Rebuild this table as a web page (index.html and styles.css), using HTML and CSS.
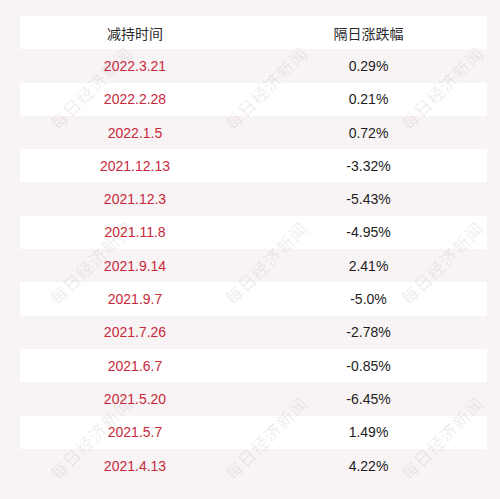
FILE: index.html
```html
<!DOCTYPE html>
<html lang="zh">
<head>
<meta charset="utf-8">
<link rel="stylesheet" href="styles.css">
</head>
<body>
<div class="page">
  <div class="table">
    <div class="row head"><div class="cell">减持时间</div><div class="cell">隔日涨跌幅</div></div>
    <div class="row"><div class="cell date">2022.3.21</div><div class="cell">0.29%</div></div>
    <div class="row white"><div class="cell date">2022.2.28</div><div class="cell">0.21%</div></div>
    <div class="row"><div class="cell date">2022.1.5</div><div class="cell">0.72%</div></div>
    <div class="row white"><div class="cell date">2021.12.13</div><div class="cell">-3.32%</div></div>
    <div class="row"><div class="cell date">2021.12.3</div><div class="cell">-5.43%</div></div>
    <div class="row white"><div class="cell date">2021.11.8</div><div class="cell">-4.95%</div></div>
    <div class="row"><div class="cell date">2021.9.14</div><div class="cell">2.41%</div></div>
    <div class="row white"><div class="cell date">2021.9.7</div><div class="cell">-5.0%</div></div>
    <div class="row"><div class="cell date">2021.7.26</div><div class="cell">-2.78%</div></div>
    <div class="row white"><div class="cell date">2021.6.7</div><div class="cell">-0.85%</div></div>
    <div class="row"><div class="cell date">2021.5.20</div><div class="cell">-6.45%</div></div>
    <div class="row white"><div class="cell date">2021.5.7</div><div class="cell">1.49%</div></div>
    <div class="row"><div class="cell date">2021.4.13</div><div class="cell">4.22%</div></div>
  </div>
  <div class="marks">
    <span class="mark m1">每日经济新闻</span>
    <span class="mark m2">每日经济新闻</span>
    <span class="mark m3">每日经济新闻</span>
    <span class="mark m4">每日经济新闻</span>
    <span class="mark m5">每日经济新闻</span>
    <span class="mark m6">每日经济新闻</span>
    <span class="mark m7">每日经济新闻</span>
    <span class="mark m8">每日经济新闻</span>
    <span class="mark m9">每日经济新闻</span>
  </div>
</div>
</body>
</html>
```

FILE: styles.css
```css
html, body {
  margin: 0;
  padding: 0;
}
body {
  background: #f8f4f5;
  font-family: "Liberation Sans", "Noto Sans CJK SC", sans-serif;
  font-size: 14px;
  color: #1c1c1c;
}
.page {
  position: relative;
  width: 500px;
  height: 499px;
  overflow: hidden;
  padding: 16px 13px 0 20px;
  box-sizing: border-box;
}
.table {
  display: flex;
  flex-direction: column;
  width: 467px;
}
.row {
  display: grid;
  grid-template-columns: 230px 237px;
  height: 33.3px;
  align-items: center;
}
.row.head, .row.white {
  background: #ffffff;
}
.cell {
  text-align: center;
  line-height: 1;
}
.head .cell {
  font-family: "Noto Sans CJK SC", "Liberation Sans", sans-serif;
  color: #2a2a2a;
}
.date {
  color: #c8283a;
}
.marks {
  position: absolute;
  inset: 0;
  pointer-events: none;
}
.mark {
  position: absolute;
  width: 120px;
  margin-left: -60px;
  margin-top: -10px;
  line-height: 20px;
  text-align: center;
  font-family: "Noto Sans CJK SC", sans-serif;
  font-size: 17px;
  letter-spacing: 1px;
  color: rgba(120, 100, 105, 0.13);
  transform: rotate(-45deg);
  white-space: nowrap;
}
.m1 { left: 91px; top: 88px; }
.m2 { left: 266px; top: 88px; }
.m3 { left: 442px; top: 88px; }
.m4 { left: 91px; top: 263px; }
.m5 { left: 266px; top: 263px; }
.m6 { left: 442px; top: 263px; }
.m7 { left: 91px; top: 438px; }
.m8 { left: 266px; top: 438px; }
.m9 { left: 442px; top: 438px; }
```
